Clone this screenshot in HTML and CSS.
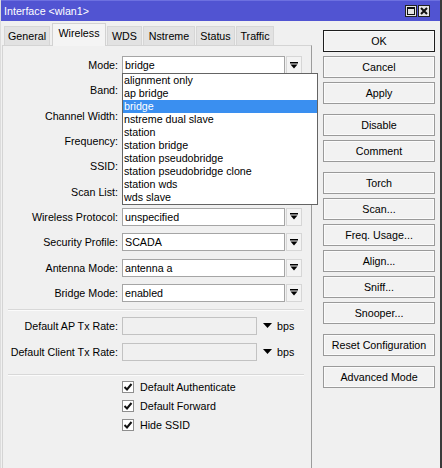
FILE: index.html
```html
<!DOCTYPE html>
<html>
<head>
<meta charset="utf-8">
<link rel="stylesheet" href="styles.css">
</head>
<body>
<div class="window">
  <div class="titlebar">
    <span class="title">Interface &lt;wlan1&gt;</span>
    <div class="tb-btns">
      <span class="tb-btn"><svg width="10" height="10" viewBox="0 0 10 10"><rect x="1.5" y="1.5" width="7" height="7" fill="none" stroke="#111" stroke-width="1"/><rect x="1" y="1" width="8" height="2" fill="#111"/></svg></span>
      <span class="tb-btn"><svg width="10" height="10" viewBox="0 0 10 10"><path d="M2 2 L8 8 M8 2 L2 8" stroke="#111" stroke-width="2"/></svg></span>
    </div>
  </div>
  <div class="main">
    <div class="left">
      <div class="tabs">
        <div class="tab t-general">General</div>
        <div class="tab t-wireless active">Wireless</div>
        <div class="tab t-wds">WDS</div>
        <div class="tab t-nstreme">Nstreme</div>
        <div class="tab t-status">Status</div>
        <div class="tab t-traffic">Traffic</div>
      </div>
      <div class="panel">
        <div class="rows">
          <div class="row">
            <span class="lbl">Mode:</span>
            <div class="field-wrap">
              <div class="field">bridge</div>
              <ul class="dropdown">
                <li>alignment only</li>
                <li>ap bridge</li>
                <li class="sel">bridge</li>
                <li>nstreme dual slave</li>
                <li>station</li>
                <li>station bridge</li>
                <li>station pseudobridge</li>
                <li>station pseudobridge clone</li>
                <li>station wds</li>
                <li>wds slave</li>
              </ul>
            </div>
            <span class="arrow-btn"><svg width="8" height="7" viewBox="0 0 8 7"><rect x="0" y="0" width="8" height="1.5" fill="#000"/><path d="M0.5 2.5 H7.5 L4 6.5 Z" fill="#000"/></svg></span>
          </div>
          <div class="row"><span class="lbl">Band:</span><div class="field-wrap"><div class="field"></div></div><span class="arrow-btn"></span></div>
          <div class="row"><span class="lbl">Channel Width:</span><div class="field-wrap"><div class="field"></div></div><span class="arrow-btn"></span></div>
          <div class="row"><span class="lbl">Frequency:</span><div class="field-wrap"><div class="field"></div></div><span class="arrow-btn"></span></div>
          <div class="row"><span class="lbl">SSID:</span><div class="field-wrap"><div class="field"></div></div><span class="arrow-btn"></span></div>
          <div class="row"><span class="lbl">Scan List:</span><div class="field-wrap"><div class="field"></div></div><span class="arrow-btn"></span></div>
          <div class="row"><span class="lbl">Wireless Protocol:</span><div class="field-wrap"><div class="field">unspecified</div></div><span class="arrow-btn"><svg width="8" height="7" viewBox="0 0 8 7"><rect x="0" y="0" width="8" height="1.5" fill="#000"/><path d="M0.5 2.5 H7.5 L4 6.5 Z" fill="#000"/></svg></span></div>
          <div class="row"><span class="lbl">Security Profile:</span><div class="field-wrap"><div class="field">SCADA</div></div><span class="arrow-btn"><svg width="8" height="7" viewBox="0 0 8 7"><rect x="0" y="0" width="8" height="1.5" fill="#000"/><path d="M0.5 2.5 H7.5 L4 6.5 Z" fill="#000"/></svg></span></div>
          <div class="row"><span class="lbl">Antenna Mode:</span><div class="field-wrap"><div class="field">antenna a</div></div><span class="arrow-btn"><svg width="8" height="7" viewBox="0 0 8 7"><rect x="0" y="0" width="8" height="1.5" fill="#000"/><path d="M0.5 2.5 H7.5 L4 6.5 Z" fill="#000"/></svg></span></div>
          <div class="row"><span class="lbl">Bridge Mode:</span><div class="field-wrap"><div class="field">enabled</div></div><span class="arrow-btn"><svg width="8" height="7" viewBox="0 0 8 7"><rect x="0" y="0" width="8" height="1.5" fill="#000"/><path d="M0.5 2.5 H7.5 L4 6.5 Z" fill="#000"/></svg></span></div>
        </div>
        <div class="sep sep1"></div>
        <div class="rate-rows">
          <div class="row"><span class="lbl">Default AP Tx Rate:</span><div class="rate-field"></div><svg class="tri" width="9" height="5" viewBox="0 0 9 5"><path d="M0 0 H9 L4.5 5 Z" fill="#000"/></svg><span class="unit">bps</span></div>
          <div class="row"><span class="lbl">Default Client Tx Rate:</span><div class="rate-field"></div><svg class="tri" width="9" height="5" viewBox="0 0 9 5"><path d="M0 0 H9 L4.5 5 Z" fill="#000"/></svg><span class="unit">bps</span></div>
        </div>
        <div class="sep sep2"></div>
        <div class="checks">
          <div class="check"><span class="box"><svg width="10" height="10" viewBox="0 0 10 10"><path d="M1.5 5 L4 7.5 L8.5 2" fill="none" stroke="#111" stroke-width="2"/></svg></span>Default Authenticate</div>
          <div class="check"><span class="box"><svg width="10" height="10" viewBox="0 0 10 10"><path d="M1.5 5 L4 7.5 L8.5 2" fill="none" stroke="#111" stroke-width="2"/></svg></span>Default Forward</div>
          <div class="check"><span class="box"><svg width="10" height="10" viewBox="0 0 10 10"><path d="M1.5 5 L4 7.5 L8.5 2" fill="none" stroke="#111" stroke-width="2"/></svg></span>Hide SSID</div>
        </div>
      </div>
    </div>
    <div class="right">
      <div class="group">
        <div class="btn default">OK</div>
        <div class="btn">Cancel</div>
        <div class="btn">Apply</div>
      </div>
      <div class="group">
        <div class="btn">Disable</div>
        <div class="btn">Comment</div>
      </div>
      <div class="group">
        <div class="btn">Torch</div>
        <div class="btn">Scan...</div>
        <div class="btn">Freq. Usage...</div>
        <div class="btn">Align...</div>
        <div class="btn">Sniff...</div>
        <div class="btn">Snooper...</div>
      </div>
      <div class="group">
        <div class="btn">Reset Configuration</div>
      </div>
      <div class="group">
        <div class="btn">Advanced Mode</div>
      </div>
    </div>
  </div>
</div>
</body>
</html>
```
FILE: styles.css
```css
* { box-sizing: border-box; }
html, body { margin: 0; padding: 0; }
body {
  font-family: "Liberation Sans", Arial, sans-serif;
  font-size: 10.7px;
  color: #000;
  background: #f0f0f0;
}
.window {
  width: 442px;
  height: 468px;
  overflow: hidden;
  background: #f0f0f0;
  border-left: 1px solid #dcdcdc;
  border-right: 2px solid #3a3a3a;
}
.titlebar {
  height: 21px;
  background: #5154d2;
  border-top: 1px solid #6d70e0;
  color: #fff;
  display: flex;
  align-items: center;
  justify-content: space-between;
  padding: 0 10px 0 3px;
}
.title { font-size: 10.7px; }
.tb-btns { display: flex; gap: 1px; }
.tb-btn {
  width: 12px;
  height: 12px;
  background: #e4e4e4;
  border: 1px solid #222;
  display: flex;
  align-items: center;
  justify-content: center;
}
.main { display: flex; }
.left { width: 311px; }
.tabs {
  display: flex;
  align-items: flex-end;
  height: 24px;
  padding: 2px 0 0 3px;
}
.tab {
  height: 19px;
  line-height: 18px;
  text-align: center;
  background: #e2e2e2;
  border: 1px solid #d6d6d6;
  border-bottom: none;
  margin-right: 1px;
}
.tab.active {
  height: 23px;
  line-height: 19px;
  background: #f4f4f4;
  position: relative;
  z-index: 2;
  margin-bottom: -1px;
  border-color: #d2d2d2;
}
.t-general { width: 46px; margin-right: 2px; }
.t-wireless { width: 54px; }
.t-wds { width: 35px; }
.t-nstreme { width: 52px; }
.t-status { width: 39px; }
.t-traffic { width: 38px; }
.panel {
  margin-left: 1px;
  width: 310px;
  height: 430px;
  border: 1px solid #d4d4d4;
  border-right-color: #9c9c9c;
  background: #f0f0f0;
}
.rows {
  display: flex;
  flex-direction: column;
  gap: 7.33px;
  padding-top: 10px;
}
.row {
  display: flex;
  align-items: center;
  height: 18px;
}
.lbl {
  width: 115px;
  margin-right: 4px;
  text-align: right;
  white-space: nowrap;
}
.field-wrap {
  position: relative;
  width: 163px;
  height: 18px;
}
.field {
  height: 18px;
  background: #fff;
  border: 1px solid #a5a5a5;
  padding-left: 2px;
  line-height: 16px;
  white-space: nowrap;
}
.arrow-btn {
  width: 16px;
  height: 18px;
  margin-left: 1px;
  border: 1px solid #d6d6d6;
  background: #f3f3f3;
  display: flex;
  align-items: center;
  justify-content: center;
}
.dropdown {
  position: absolute;
  z-index: 5;
  top: 17px;
  left: 0;
  width: 196px;
  margin: 0;
  padding: 0;
  list-style: none;
  background: #fff;
  border: 1px solid #646464;
}
.dropdown li {
  height: 13px;
  line-height: 13px;
  padding-left: 1px;
  white-space: nowrap;
}
.dropdown li.sel {
  background: #3a8ff0;
  color: #fff;
}
.sep {
  height: 2px;
  margin-left: 5px;
  width: 296px;
  border-top: 1px solid #d8d8d8;
  border-bottom: 1px solid #fbfbfb;
}
.sep1 { margin-top: 7px; }
.sep2 { margin-top: 13px; }
.rate-rows {
  display: flex;
  flex-direction: column;
  gap: 8px;
  margin-top: 6px;
}
.rate-field {
  width: 135px;
  height: 18px;
  background: #f0f0f0;
  border: 1px solid #c2c2c2;
}
.tri { margin-left: 6px; }
.unit { margin-left: 5px; }
.checks {
  margin-top: 2px;
  padding-left: 119px;
}
.check {
  height: 19px;
  display: flex;
  align-items: center;
}
.box {
  width: 12px;
  height: 12px;
  border: 1px solid #8e8e8e;
  background: #fff;
  margin-right: 6px;
  display: flex;
  align-items: center;
  justify-content: center;
}
.right {
  padding: 9px 0 0 11px;
  display: flex;
  flex-direction: column;
  gap: 10px;
}
.group {
  display: flex;
  flex-direction: column;
  gap: 4px;
}
.btn {
  width: 112px;
  height: 22px;
  line-height: 20px;
  text-align: center;
  background: #f2f2f2;
  border: 1px solid #9a9a9a;
  box-shadow: inset 0 0 0 1px #fbfbfb;
  white-space: nowrap;
}
.btn.default {
  border-color: #1e1e1e;
}
```
